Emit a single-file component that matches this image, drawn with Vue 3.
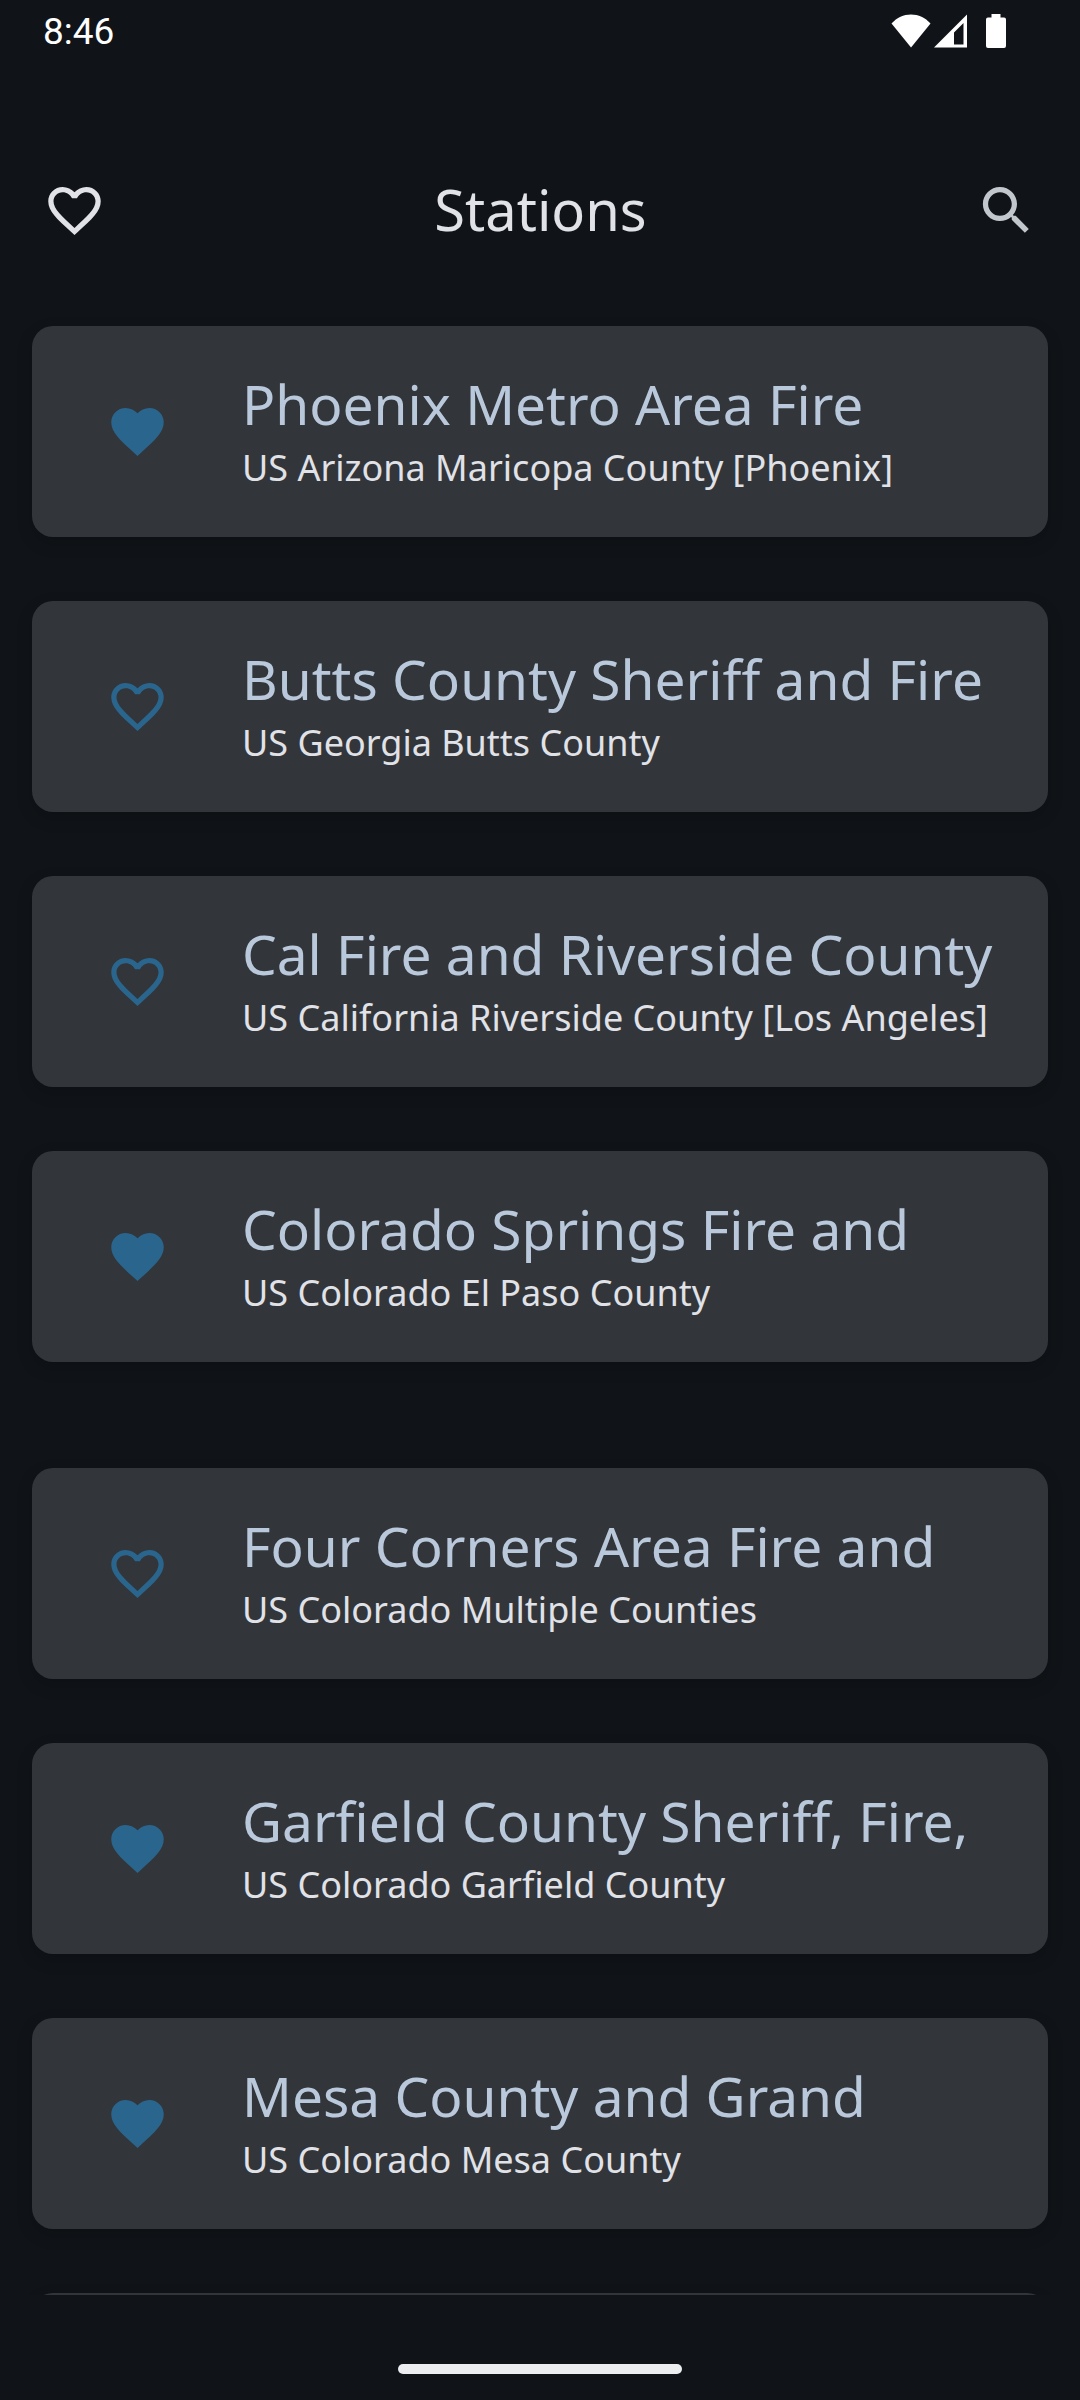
<script setup>
import { reactive } from 'vue'

const groups = reactive([
  [
    { name: 'Phoenix Metro Area Fire', place: 'US Arizona Maricopa County [Phoenix]', liked: true },
    { name: 'Butts County Sheriff and Fire', place: 'US Georgia Butts County', liked: false },
    { name: 'Cal Fire and Riverside County', place: 'US California Riverside County [Los Angeles]', liked: false },
    { name: 'Colorado Springs Fire and', place: 'US Colorado El Paso County', liked: true },
  ],
  [
    { name: 'Four Corners Area Fire and', place: 'US Colorado Multiple Counties', liked: false },
    { name: 'Garfield County Sheriff, Fire,', place: 'US Colorado Garfield County', liked: true },
    { name: 'Mesa County and Grand', place: 'US Colorado Mesa County', liked: true },
  ],
])

const heartOutline =
  'M16.5 3c-1.74 0-3.41.81-4.5 2.09C10.91 3.81 9.24 3 7.5 3 4.42 3 2 5.42 2 8.5c0 3.78 3.4 6.86 8.55 11.54L12 21.35l1.45-1.32C18.6 15.36 22 12.28 22 8.5 22 5.42 19.58 3 16.5 3zm-4.4 15.55l-.1.1-.1-.1C7.14 14.24 4 11.39 4 8.5 4 6.5 5.5 5 7.5 5c1.54 0 3.04.99 3.57 2.36h1.87C13.46 5.99 14.96 5 16.5 5c2 0 3.5 1.5 3.5 3.5 0 2.89-3.14 5.74-7.9 10.05z'
const heartFilled =
  'M12 21.35l-1.45-1.32C5.4 15.36 2 12.28 2 8.5 2 5.42 4.42 3 7.5 3c1.74 0 3.41.81 4.5 2.09C13.09 3.81 14.76 3 16.5 3 19.58 3 22 5.42 22 8.5c0 3.78-3.4 6.86-8.55 11.54L12 21.35z'
</script>

<template>
  <div class="screen">
    <div class="status">
      <span class="clock">8:46</span>
      <span class="indicators">
        <svg width="40" height="34" viewBox="0 0 40 34" aria-hidden="true">
          <path d="M20 33.500L.500 9.500C6 3.500 12.500.500 20 .500s14 3 19.500 9z" />
        </svg>
        <svg width="33" height="34" viewBox="0 0 33 34" aria-hidden="true">
          <path fill-rule="evenodd" d="M0 33.500L33 .500v33zM29.500 9L20 18.500V30.500h9.500z" />
        </svg>
        <svg class="battery" width="20" height="34" viewBox="0 0 20 34" aria-hidden="true">
          <path d="M5.500 0h9v3.500H18a2 2 0 0 1 2 2V32a2 2 0 0 1-2 2H2a2 2 0 0 1-2-2V5.500a2 2 0 0 1 2-2h3.500z" />
        </svg>
      </span>
    </div>

    <header class="bar">
      <button class="icon-button" type="button" aria-label="Favorites">
        <svg class="icon" viewBox="0 0 24 24"><path :d="heartOutline" /></svg>
      </button>
      <h1 class="heading">Stations</h1>
      <button class="icon-button search" type="button" aria-label="Search">
        <svg class="icon" viewBox="0 0 24 24">
          <path d="M15.500 14h-.79l-.28-.27C15.410 12.590 16 11.110 16 9.500 16 5.910 13.090 3 9.500 3S3 5.910 3 9.500 5.910 16 9.500 16c1.610 0 3.090-.59 4.230-1.570l.27.28v.79l5 4.990L20.490 19l-4.990-5zm-6 0C7.010 14 5 11.990 5 9.500S7.010 5 9.500 5 14 7.010 14 9.500 11.990 14 9.500 14z" />
        </svg>
      </button>
    </header>

    <main class="list">
      <ul v-for="(group, index) in groups" :key="index" class="group">
        <li v-for="station in group" :key="station.name" class="card">
          <button
            class="like"
            type="button"
            :aria-label="'Favorite ' + station.name"
            :aria-pressed="station.liked"
            @click="station.liked = !station.liked"
          >
            <svg class="icon" viewBox="0 0 24 24">
              <path :d="station.liked ? heartFilled : heartOutline" />
            </svg>
          </button>
          <div class="text">
            <h2 class="name">{{ station.name }}</h2>
            <p class="place">{{ station.place }}</p>
          </div>
        </li>
      </ul>
      <div class="card next" aria-hidden="true"></div>
    </main>

    <div class="gesture"><span class="pill"></span></div>
  </div>
</template>

<style>
body {
  background: #101418;
}
</style>

<style scoped>
.screen {
  display: flex;
  flex-direction: column;
  height: 100vh;
  overflow: hidden;
  background: #101418;
  color: #e0e2e8;
  font-family: "Noto Sans", "Open Sans", sans-serif;
}

.status {
  display: flex;
  flex: none;
  align-items: center;
  justify-content: space-between;
  box-sizing: border-box;
  height: 62px;
  padding: 0 74px 0 43px;
  color: #fff;
}

.clock {
  padding-top: 2px;
  font-family: Roboto, sans-serif;
  font-size: 37px;
  line-height: 44px;
}

.indicators {
  display: flex;
  gap: 3px;
  fill: currentColor;
}

.battery {
  margin-left: 16px;
}

.bar {
  display: flex;
  flex: none;
  align-items: center;
  justify-content: space-between;
  height: 168px;
  margin-top: 64px;
  padding: 0 10px 0 11px;
}

.icon-button,
.like {
  display: flex;
  flex: none;
  align-items: center;
  justify-content: center;
  width: 126px;
  height: 126px;
  padding: 0;
  border: 0;
  background: none;
  color: inherit;
  cursor: pointer;
}

.search {
  color: #c2c7ce;
}

.icon {
  width: 63px;
  height: 63px;
  fill: currentColor;
}

.heading {
  margin: 0;
  padding-bottom: 2px;
  font-size: 56px;
  font-weight: 400;
  line-height: 72px;
}

.list {
  flex: 1;
  min-height: 0;
  overflow: hidden;
  padding: 32px 32px 0;
}

.group {
  display: flex;
  flex-direction: column;
  gap: 64px;
  margin: 0;
  padding: 0;
  list-style: none;
}

.group + .group {
  margin-top: 106px;
}

.card {
  display: flex;
  align-items: center;
  gap: 42px;
  padding: 42px;
  border-radius: 21px;
  background: #323539;
  box-shadow: 0 6px 16px rgba(0, 0, 0, 0.2);
}

.next {
  min-height: 127px;
  margin-top: 64px;
}

.like {
  color: #2a658d;
}

.text {
  flex: 1;
  min-width: 0;
}

.name,
.place {
  margin: 0;
  font-weight: 400;
  white-space: nowrap;
}

.name {
  color: #b9c8da;
  font-size: 55px;
  line-height: 72px;
}

.place {
  font-size: 36px;
  line-height: 55px;
}

.gesture {
  display: flex;
  flex: none;
  align-items: flex-end;
  justify-content: center;
  box-sizing: border-box;
  height: 105px;
  padding-bottom: 26px;
}

.pill {
  width: 284px;
  height: 10px;
  border-radius: 5px;
  background: #ebedef;
}
</style>
